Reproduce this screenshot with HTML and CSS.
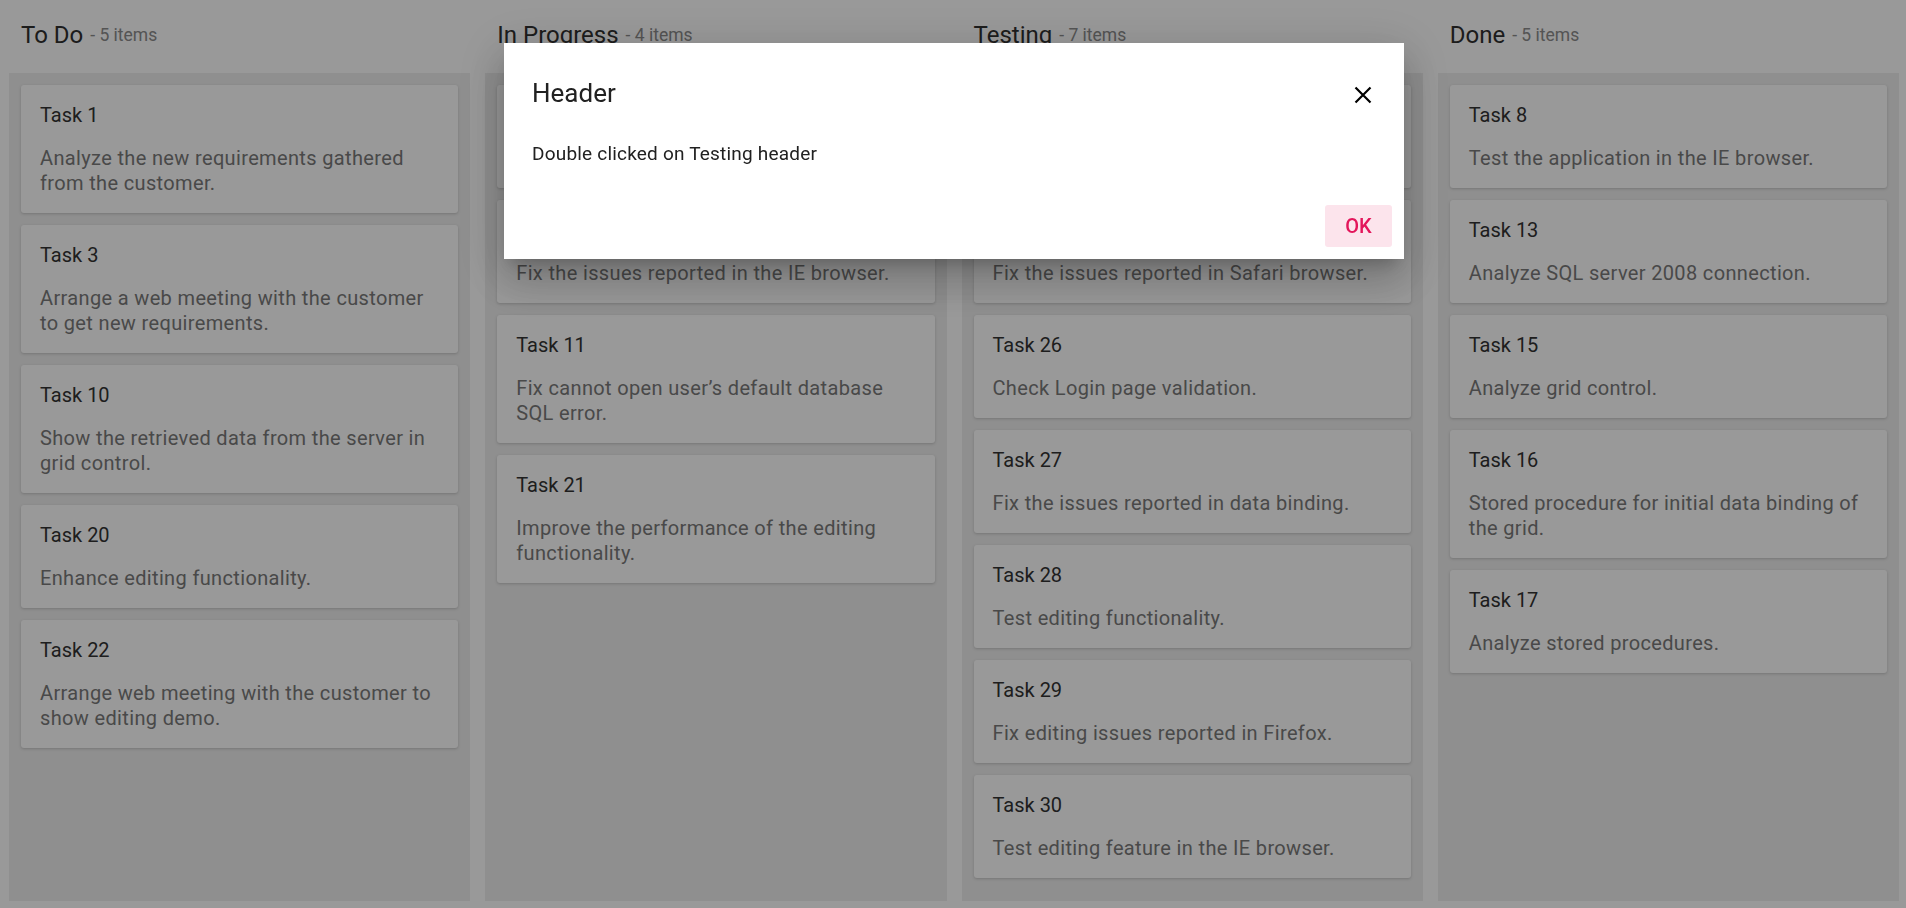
FILE: index.html
```html
<!DOCTYPE html>
<html lang="en">
<head>
<meta charset="utf-8">
<title>Kanban</title>
<link rel="stylesheet" href="styles.css">
</head>
<body>
<div class="kanban">
  <section class="column">
    <header class="column-header"><span class="column-title">To Do</span><span class="column-count">- 5 items</span></header>
    <div class="column-body">
      <article class="card"><div class="card-title">Task 1</div><div class="card-text">Analyze the new requirements gathered from the customer.</div></article>
      <article class="card"><div class="card-title">Task 3</div><div class="card-text">Arrange a web meeting with the customer to get new requirements.</div></article>
      <article class="card"><div class="card-title">Task 10</div><div class="card-text">Show the retrieved data from the server in grid control.</div></article>
      <article class="card"><div class="card-title">Task 20</div><div class="card-text">Enhance editing functionality.</div></article>
      <article class="card"><div class="card-title">Task 22</div><div class="card-text">Arrange web meeting with the customer to show editing demo.</div></article>
    </div>
  </section>
  <section class="column">
    <header class="column-header"><span class="column-title">In Progress</span><span class="column-count">- 4 items</span></header>
    <div class="column-body">
      <article class="card"><div class="card-title">Task 2</div><div class="card-text">Improve application performance.</div></article>
      <article class="card"><div class="card-title">Task 4</div><div class="card-text">Fix the issues reported in the IE browser.</div></article>
      <article class="card"><div class="card-title">Task 11</div><div class="card-text">Fix cannot open user’s default database SQL error.</div></article>
      <article class="card"><div class="card-title">Task 21</div><div class="card-text">Improve the performance of the editing functionality.</div></article>
    </div>
  </section>
  <section class="column">
    <header class="column-header"><span class="column-title">Testing</span><span class="column-count">- 7 items</span></header>
    <div class="column-body">
      <article class="card"><div class="card-title">Task 6</div><div class="card-text">Test the application in the Safari browser.</div></article>
      <article class="card"><div class="card-title">Task 7</div><div class="card-text">Fix the issues reported in Safari browser.</div></article>
      <article class="card"><div class="card-title">Task 26</div><div class="card-text">Check Login page validation.</div></article>
      <article class="card"><div class="card-title">Task 27</div><div class="card-text">Fix the issues reported in data binding.</div></article>
      <article class="card"><div class="card-title">Task 28</div><div class="card-text">Test editing functionality.</div></article>
      <article class="card"><div class="card-title">Task 29</div><div class="card-text">Fix editing issues reported in Firefox.</div></article>
      <article class="card"><div class="card-title">Task 30</div><div class="card-text">Test editing feature in the IE browser.</div></article>
    </div>
  </section>
  <section class="column">
    <header class="column-header"><span class="column-title">Done</span><span class="column-count">- 5 items</span></header>
    <div class="column-body">
      <article class="card"><div class="card-title">Task 8</div><div class="card-text">Test the application in the IE browser.</div></article>
      <article class="card"><div class="card-title">Task 13</div><div class="card-text">Analyze SQL server 2008 connection.</div></article>
      <article class="card"><div class="card-title">Task 15</div><div class="card-text">Analyze grid control.</div></article>
      <article class="card"><div class="card-title">Task 16</div><div class="card-text">Stored procedure for initial data binding of the grid.</div></article>
      <article class="card"><div class="card-title">Task 17</div><div class="card-text">Analyze stored procedures.</div></article>
    </div>
  </section>
</div>

<div class="overlay"></div>

<div class="dialog" role="dialog">
  <div class="dialog-header">
    <div class="dialog-title">Header</div>
    <button class="dialog-close" aria-label="Close">
      <svg width="18" height="18" viewBox="0 0 18 18"><path d="M1.5 1.5 L16.5 16.5 M16.5 1.5 L1.5 16.5" stroke="#000" stroke-width="2.2" fill="none"/></svg>
    </button>
  </div>
  <div class="dialog-content">Double clicked on Testing header</div>
  <div class="dialog-footer"><button class="btn-ok">OK</button></div>
</div>
</body>
</html>
```

FILE: styles.css
```css
* { box-sizing: border-box; }

html, body {
  margin: 0;
  height: 100%;
}

body {
  font-family: Roboto, "Liberation Sans", sans-serif;
  background: #ffffff;
  overflow: hidden;
}

.kanban {
  display: flex;
  gap: 15px;
  height: 908px;
  padding: 0 7px 7px 9px;
}

.column {
  flex: 1 1 0;
  min-width: 0;
  display: flex;
  flex-direction: column;
}

.column-header {
  height: 73px;
  padding: 21px 0 0 12px;
  display: flex;
  align-items: flex-start;
}

.column-title {
  font-size: 24px;
  line-height: 28px;
  color: #303030;
}

.column-count {
  font-size: 17.5px;
  line-height: 20px;
  margin-top: 4px;
  color: #8c8c8c;
  margin-left: 7px;
}

.column-body {
  flex: 1;
  background: #eeeeee;
  padding: 12px;
  display: flex;
  flex-direction: column;
  gap: 12px;
}

.card {
  background: #ffffff;
  border-radius: 3px;
  box-shadow: 0 1px 3px rgba(0, 0, 0, 0.18);
  padding: 18px 15px 17px 19px;
}

.card-title {
  font-size: 20px;
  line-height: 25px;
  color: #333333;
  margin-bottom: 18px;
}

.card-text {
  font-size: 20px;
  letter-spacing: 0.35px;
  line-height: 25px;
  color: #7a7a7a;
}

.overlay {
  position: fixed;
  inset: 0;
  background: rgba(0, 0, 0, 0.4);
}

.dialog {
  position: fixed;
  left: 504px;
  top: 43px;
  width: 900px;
  height: 216px;
  background: #ffffff;
  display: flex;
  flex-direction: column;
  box-shadow: 0 11px 15px -7px rgba(0, 0, 0, 0.2), 0 24px 38px 3px rgba(0, 0, 0, 0.14), 0 9px 46px 8px rgba(0, 0, 0, 0.12);
}

.dialog-header {
  display: flex;
  align-items: center;
  justify-content: space-between;
  padding: 32px 32px 0 28px;
}

.dialog-title {
  font-size: 26px;
  line-height: 36px;
  color: #212121;
}

.dialog-close {
  border: 0;
  background: none;
  padding: 0;
  width: 18px;
  height: 18px;
  margin-top: 4px;
  display: flex;
}

.dialog-content {
  padding: 29px 28px 0 28px;
  font-size: 19px;
  letter-spacing: 0.2px;
  line-height: 28px;
  color: #212121;
}

.dialog-footer {
  margin-top: auto;
  display: flex;
  justify-content: flex-end;
  padding: 0 12px 12px 0;
}

.btn-ok {
  border: 0;
  border-radius: 3px;
  background: #fce4ec;
  color: #e3165b;
  font-family: Roboto, "Liberation Sans", sans-serif;
  font-size: 20px;
  font-weight: 500;
  width: 67px;
  height: 42px;
  padding: 0;
}
```
